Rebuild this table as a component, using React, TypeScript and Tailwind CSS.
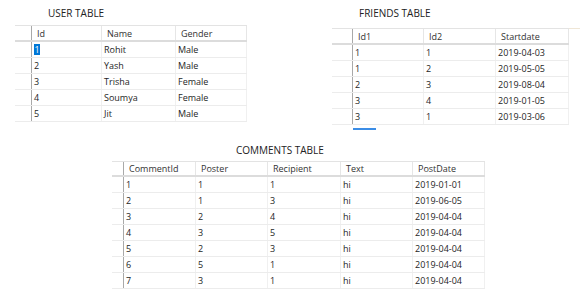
import React from "react";

type Col = { name: string; w: number };

interface GridProps {
  lead: number;
  cols: Col[];
  rows: string[][];
  selectFirst?: boolean;
  headH?: number;
}

const DataGrid: React.FC<GridProps> = ({ lead, cols, rows, selectFirst, headH = 16 }) => {
  return (
    <div className="border-t border-[#e3e3e3]">
      <div className="flex border-b-2 border-[#dcdcdc]" style={{ height: headH }}>
        <div style={{ width: lead }} />
        {cols.map((c, i) => (
          <div
            key={c.name}
            className={
              "flex items-center pl-[5px] text-[#333] border-r border-[#e6e6e6] " +
              (i === 0 ? "border-l border-l-[#a9a9a9]" : "")
            }
            style={{ width: c.w }}
          >
            {c.name}
          </div>
        ))}
      </div>
      {rows.map((r, ri) => (
        <div key={ri} className="flex h-[16px] border-b border-[#ececec]">
          <div style={{ width: lead }} />
          {r.map((v, i) => (
            <div
              key={i}
              className={
                "flex items-center pl-[2px] text-[#1e1e1e] border-r border-[#f0f0f0] " +
                (i === 0 ? "border-l border-l-[#a9a9a9]" : "")
              }
              style={{ width: cols[i].w }}
            >
              {selectFirst && ri === 0 && i === 0 ? (
                <span className="bg-[#0078d7] text-white leading-[11px] px-[0.5px]">{v}</span>
              ) : (
                v
              )}
            </div>
          ))}
        </div>
      ))}
    </div>
  );
};

const users = [
  ["1", "Rohit", "Male"],
  ["2", "Yash", "Male"],
  ["3", "Trisha", "Female"],
  ["4", "Soumya", "Female"],
  ["5", "Jit", "Male"],
];

const friends = [
  ["1", "1", "2019-04-03"],
  ["1", "2", "2019-05-05"],
  ["2", "3", "2019-08-04"],
  ["3", "4", "2019-01-05"],
  ["3", "1", "2019-03-06"],
];

const comments = [
  ["1", "1", "1", "hi", "2019-01-01"],
  ["2", "1", "3", "hi", "2019-06-05"],
  ["3", "2", "4", "hi", "2019-04-04"],
  ["4", "3", "5", "hi", "2019-04-04"],
  ["5", "2", "3", "hi", "2019-04-04"],
  ["6", "5", "1", "hi", "2019-04-04"],
  ["7", "3", "1", "hi", "2019-04-04"],
];

export default function App() {
  return (
    <div className="w-[580px] h-[305px] bg-white overflow-hidden font-['Open_Sans',sans-serif] text-[9px] leading-none">
      <div className="flex pt-[8px]">
        <div className="ml-[15px] w-[232px]">
          <div className="ml-[33px] h-[17px] text-[10px] text-[#222]">USER TABLE</div>
          <DataGrid
            lead={16}
            selectFirst
            cols={[
              { name: "Id", w: 71 },
              { name: "Name", w: 74 },
              { name: "Gender", w: 71 },
            ]}
            rows={users}
          />
        </div>
        <div className="ml-[85px] flex-1">
          <div className="ml-[27px] h-[20px] text-[10px] text-[#222]">FRIENDS TABLE</div>
          <div className="flex">
            <div className="w-[237px]">
              <DataGrid
                lead={20}
                cols={[
                  { name: "Id1", w: 72 },
                  { name: "Id2", w: 72 },
                  { name: "Startdate", w: 73 },
                ]}
                rows={friends}
              />
              <div className="ml-[21px] w-[23px] h-[2px] bg-[#3b8de6] mt-[3px]" />
            </div>
            <div className="flex-1 border-t border-[#efe6d6]" />
          </div>
        </div>
      </div>
      <div className="ml-[112px] mt-[15px] w-[373px]">
        <div className="ml-[124px] h-[16px] text-[10px] text-[#222]">COMMENTS TABLE</div>
        <DataGrid
          lead={11}
          headH={15}
          cols={[
            { name: "CommentId", w: 73 },
            { name: "Poster", w: 72 },
            { name: "Recipient", w: 73 },
            { name: "Text", w: 72 },
            { name: "PostDate", w: 72 },
          ]}
          rows={comments}
        />
      </div>
    </div>
  );
}
